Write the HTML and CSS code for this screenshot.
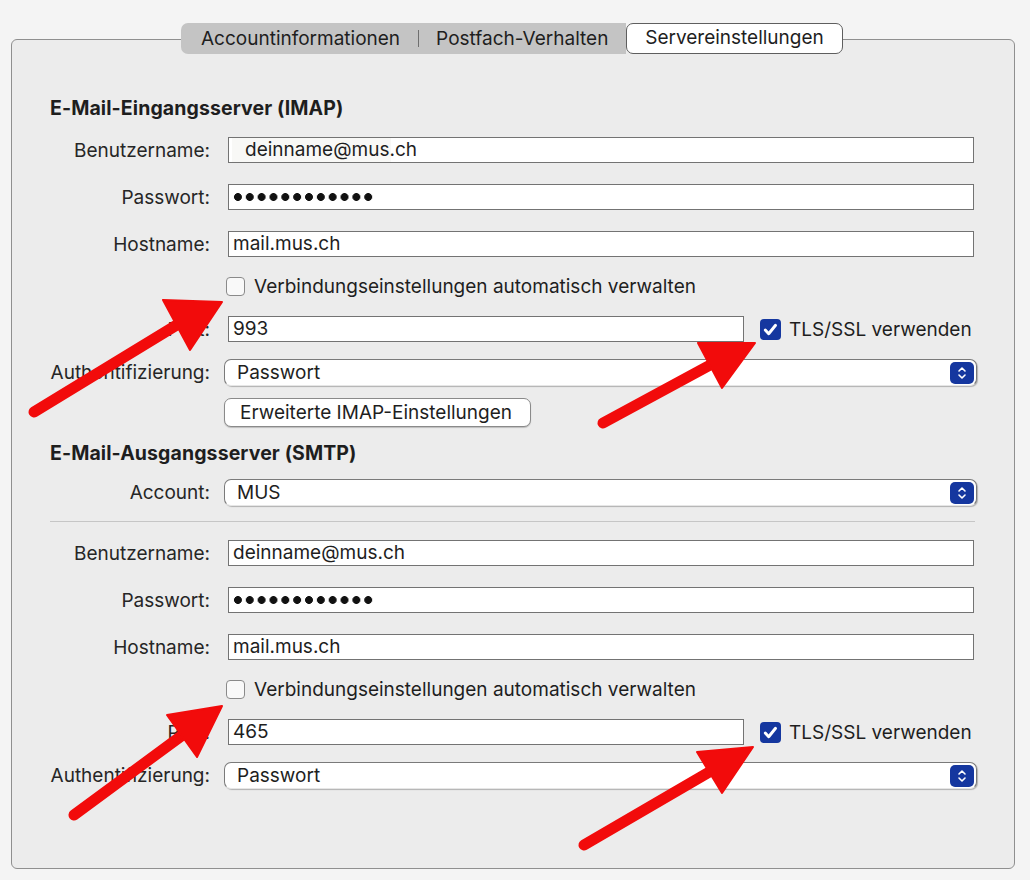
FILE: index.html
```html
<!DOCTYPE html>
<html lang="de">
<head>
    <meta charset="UTF-8">
    <title>Servereinstellungen</title>
    <link rel="stylesheet" href="styles.css">
</head>
<body>
    <div class="page">
        <div class="panel">
            <div class="tabs">
                <div class="tab-group">
                    <span class="tab">Accountinformationen</span>
                    <span class="tab-sep"></span>
                    <span class="tab">Postfach-Verhalten</span>
                </div>
                <div class="tab tab-active">Servereinstellungen</div>
            </div>

            <div class="form">
                <!-- Eingangsserver -->
                <h2 class="section-title">E-Mail-Eingangsserver (IMAP)</h2>
                <div class="row">
                    <span class="label">Benutzername:</span>
                    <div class="field field-patched"><span class="patch">deinname@mus.ch</span></div>
                </div>
                <div class="row">
                    <span class="label">Passwort:</span>
                    <div class="field"><span class="dots"></span></div>
                </div>
                <div class="row">
                    <span class="label">Hostname:</span>
                    <div class="field">mail.mus.ch</div>
                </div>
                <div class="row row-check">
                    <span class="label"></span>
                    <div class="check-line">
                        <span class="checkbox"></span>
                        <span>Verbindungseinstellungen automatisch verwalten</span>
                    </div>
                </div>
                <div class="row row-port">
                    <span class="label">Port:</span>
                    <div class="port-line">
                        <div class="field field-port">993</div>
                        <span class="checkbox checkbox-on"><svg viewBox="0 0 20 20"><path d="M5 10.5l3.3 3.5 6.5-8" /></svg></span>
                        <span>TLS/SSL verwenden</span>
                    </div>
                </div>
                <div class="row row-popup">
                    <span class="label">Authentifizierung:</span>
                    <div class="popup">
                        <span>Passwort</span>
                        <span class="stepper"><svg viewBox="0 0 24 22"><path d="M9 9l3-3 3 3M9 13l3 3 3-3" /></svg></span>
                    </div>
                </div>
                <div class="row row-button">
                    <span class="label"></span>
                    <div><button class="button">Erweiterte IMAP-Einstellungen</button></div>
                </div>

                <!-- Ausgangsserver -->
                <h2 class="section-title section-second">E-Mail-Ausgangsserver (SMTP)</h2>
                <div class="row row-popup">
                    <span class="label">Account:</span>
                    <div class="popup">
                        <span>MUS</span>
                        <span class="stepper"><svg viewBox="0 0 24 22"><path d="M9 9l3-3 3 3M9 13l3 3 3-3" /></svg></span>
                    </div>
                </div>
                <hr class="separator">
                <div class="row">
                    <span class="label">Benutzername:</span>
                    <div class="field">deinname@mus.ch</div>
                </div>
                <div class="row">
                    <span class="label">Passwort:</span>
                    <div class="field"><span class="dots"></span></div>
                </div>
                <div class="row">
                    <span class="label">Hostname:</span>
                    <div class="field">mail.mus.ch</div>
                </div>
                <div class="row row-check">
                    <span class="label"></span>
                    <div class="check-line">
                        <span class="checkbox"></span>
                        <span>Verbindungseinstellungen automatisch verwalten</span>
                    </div>
                </div>
                <div class="row row-port">
                    <span class="label">Port:</span>
                    <div class="port-line">
                        <div class="field field-port">465</div>
                        <span class="checkbox checkbox-on"><svg viewBox="0 0 20 20"><path d="M5 10.5l3.3 3.5 6.5-8" /></svg></span>
                        <span>TLS/SSL verwenden</span>
                    </div>
                </div>
                <div class="row row-popup">
                    <span class="label">Authentifizierung:</span>
                    <div class="popup">
                        <span>Passwort</span>
                        <span class="stepper"><svg viewBox="0 0 24 22"><path d="M9 9l3-3 3 3M9 13l3 3 3-3" /></svg></span>
                    </div>
                </div>
            </div>
        </div>

        <!-- red annotation arrows drawn over the dialog -->
        <svg class="arrows" viewBox="0 0 1030 880">
            <g class="arrow">
                <line x1="34" y1="412" x2="180" y2="323" />
                <polygon points="163,300 222,302 190,350" />
            </g>
            <g class="arrow">
                <line x1="603" y1="423" x2="712" y2="364" />
                <polygon points="698,343 755,343 722,388" />
            </g>
            <g class="arrow">
                <line x1="74" y1="815" x2="184" y2="734" />
                <polygon points="167,715 222,706 197,757" />
            </g>
            <g class="arrow">
                <line x1="584" y1="845" x2="711" y2="771" />
                <polygon points="697,752 753,747 722,793" />
            </g>
        </svg>
    </div>
</body>
</html>
```

FILE: styles.css
```css
body {
    margin: 0;
    background-color: #f4f4f4;
    font-family: Inter, "Liberation Sans", sans-serif;
    font-size: 19px;
    color: #1e1e1e;
}
.page {
    position: relative;
    width: 1030px;
    height: 880px;
    padding-top: 39px;
    box-sizing: border-box;
}
.panel {
    margin-left: 11px;
    width: 1004px;
    height: 830px;
    box-sizing: border-box;
    background-color: #ececec;
    border: 1px solid #8f8f8f;
    border-radius: 6px;
    padding: 0 40px 0 38px;
}

/* Tab bar sitting on the top border */
.tabs {
    display: flex;
    width: 662px;
    height: 31px;
    margin: -17px auto 0;
    line-height: 29px;
}
.tab-group {
    display: flex;
    align-items: center;
    background-color: #c4c4c4;
    border-radius: 7px 0 0 7px;
    padding: 0 0 0 20px;
    width: 445px;
    box-sizing: border-box;
}
.tab-sep {
    width: 1px;
    height: 17px;
    margin: 0 17px 0 18px;
    background-color: #6f6f6f;
}
.tab-active {
    width: 217px;
    box-sizing: border-box;
    background-color: #fff;
    border: 1px solid #5e5e5e;
    border-radius: 7px;
    text-align: center;
    line-height: 28px;
}

.form {
    display: flex;
    flex-direction: column;
    gap: 21px;
    margin-top: 43px;
}
.section-title {
    margin: 0 0 -3px;
    font-size: 19.5px;
    font-weight: 700;
    letter-spacing: 0.1px;
    line-height: 22px;
}
.section-second {
    margin-top: -6px;
    margin-bottom: -2px;
}
.row {
    display: grid;
    grid-template-columns: 160px 1fr;
    column-gap: 18px;
    align-items: center;
}
.label {
    text-align: right;
    color: #262626;
}
.field {
    height: 26px;
    box-sizing: border-box;
    background-color: #fff;
    border: 1px solid #737373;
    padding-left: 4px;
    line-height: 24px;
}
.field-patched {
    padding-left: 3px;
}
.patch {
    display: inline-block;
    background-color: #f8f8f6;
    padding: 0 0 0 13px;
    width: 146px;
}
.dots {
    display: inline-block;
    width: 142px;
    height: 24px;
    vertical-align: top;
    background-image: radial-gradient(circle, #111 3.6px, transparent 4.2px);
    background-size: 11.85px 24px;
    background-position: -1px 0;
}

.row-check {
    margin-top: -3px;
}
.row-port {
    margin-top: -2px;
}
.row-popup {
    margin-top: -4px;
}
.check-line {
    display: flex;
    align-items: center;
    gap: 9px;
    margin-left: -2px;
    height: 22px;
}
.checkbox {
    width: 19px;
    height: 19px;
    box-sizing: border-box;
    border: 1px solid #8a8a8a;
    border-radius: 4px;
    background-color: #f9f9f9;
}
.checkbox-on {
    width: 21px;
    height: 21px;
    margin-left: 16px;
    margin-right: 8px;
    border: none;
    background-color: #15379f;
    display: flex;
}
.checkbox-on svg {
    width: 21px;
    height: 21px;
    fill: none;
    stroke: #fff;
    stroke-width: 2.8;
    stroke-linecap: round;
    stroke-linejoin: round;
}
.port-line {
    display: flex;
    align-items: center;
}
.field-port {
    width: 516px;
}

.popup {
    display: flex;
    align-items: center;
    justify-content: space-between;
    height: 27px;
    box-sizing: border-box;
    margin: 0 -3px 0 -4px;
    padding: 0 2px 0 12px;
    background-color: #fff;
    border: 1px solid #7a7a7a;
    border-bottom-color: #e6e6e6;
    border-radius: 7px;
    box-shadow: 1px 1px 1px rgba(0, 0, 0, 0.25);
}
.stepper {
    display: flex;
    width: 24px;
    height: 22px;
    background-color: #15379f;
    border-radius: 5px;
}
.stepper svg {
    width: 24px;
    height: 22px;
    fill: none;
    stroke: #fff;
    stroke-width: 1.6;
    stroke-linecap: round;
    stroke-linejoin: round;
}

.row-button {
    margin-top: -9px;
}
.button {
    display: block;
    margin-left: -4px;
    width: 307px;
    height: 29px;
    background-color: #fff;
    border: 1px solid #8a8a8a;
    border-radius: 7px;
    font-family: inherit;
    font-size: 19px;
    color: #1e1e1e;
    text-align: left;
    padding: 0 0 0 15px;
    box-shadow: 0 1px 1px rgba(0, 0, 0, 0.2);
}
.separator {
    margin: -6px -1px -3px 0;
    border: none;
    border-top: 1px solid #c6c6c6;
}

/* Red annotation arrows */
.arrows {
    position: absolute;
    top: 0;
    left: 0;
    width: 1030px;
    height: 880px;
    pointer-events: none;
}
.arrow line {
    stroke: #f20b0b;
    stroke-width: 11;
    stroke-linecap: round;
}
.arrow polygon {
    fill: #f20b0b;
    stroke: #f20b0b;
    stroke-width: 2;
    stroke-linejoin: round;
}
```
